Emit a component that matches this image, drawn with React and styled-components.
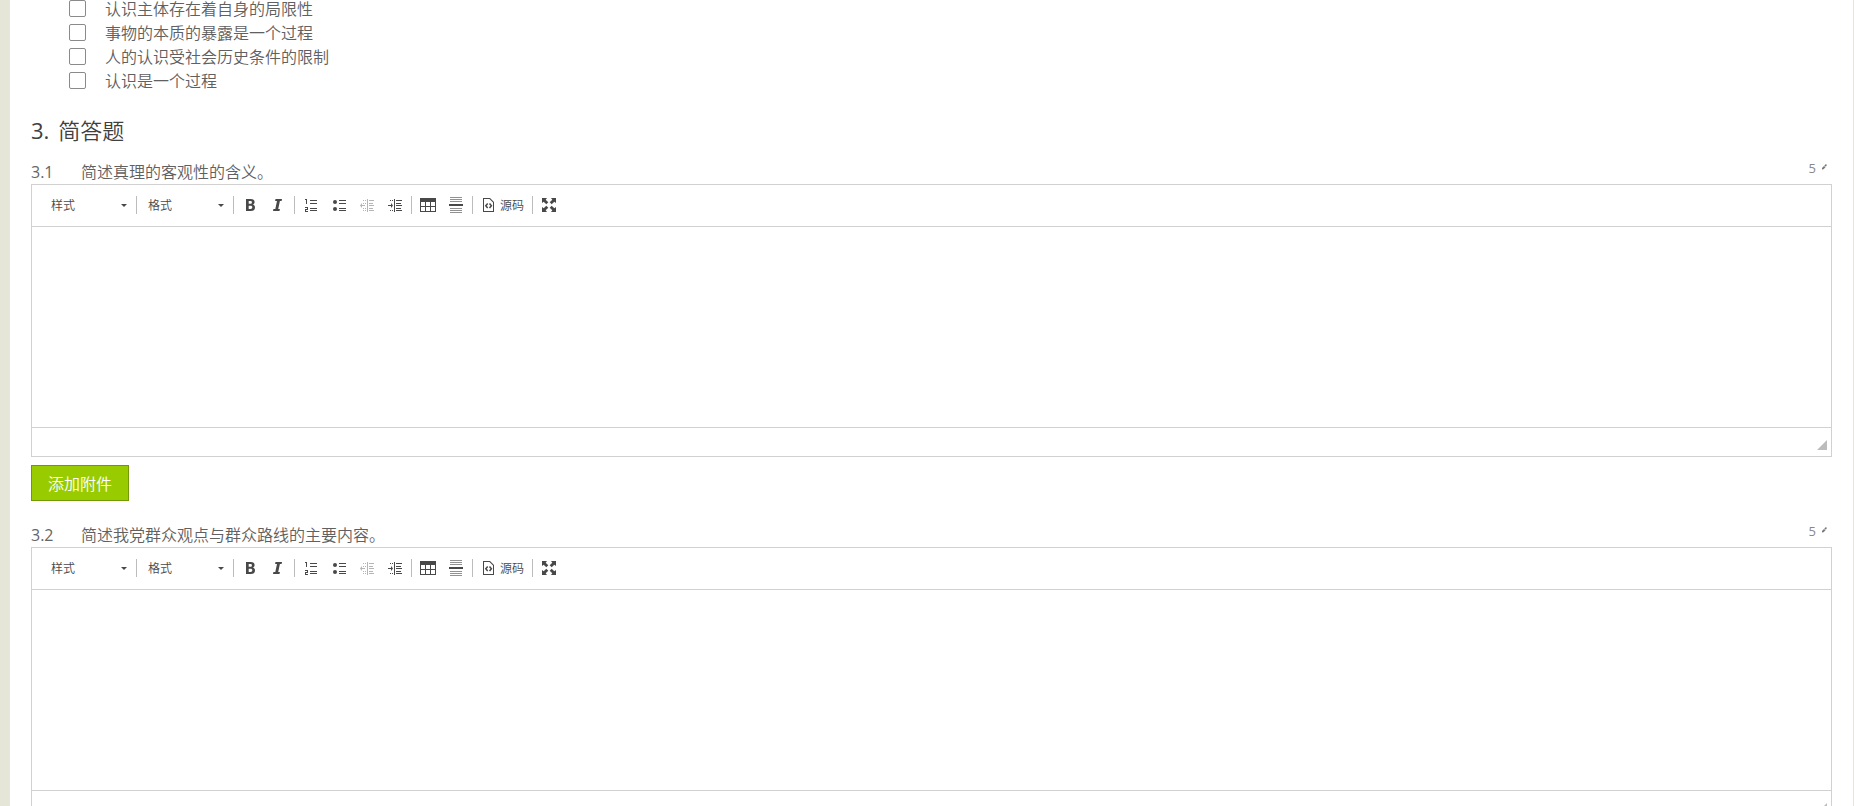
import React from "react";
import styled, { createGlobalStyle } from "styled-components";

const options = [
  "认识主体存在着自身的局限性",
  "事物的本质的暴露是一个过程",
  "人的认识受社会历史条件的限制",
  "认识是一个过程",
];

const questions = [
  { id: "3.1", text: "简述真理的客观性的含义。", score: 5, attachment: true },
  { id: "3.2", text: "简述我党群众观点与群众路线的主要内容。", score: 5 },
];

function Icon({ children }) {
  return (
    <IconSvg viewBox="0 0 16 16" fill="currentColor" aria-hidden="true">
      {children}
    </IconSvg>
  );
}

const BoldIcon = () => (
  <Icon>
    <path
      fillRule="evenodd"
      d="M4 2h4.600c2.600 0 4 1 4 3 0 1.400-.8 2.300-2 2.600 1.500.3 2.400 1.300 2.400 2.800C13 12.700 11.400 14 8.800 14H4zM6.700 4.100v2.700h1.700c1 0 1.500-.5 1.500-1.400S9.400 4.100 8.300 4.100zM6.700 8.800v3.100h1.900c1.100 0 1.700-.6 1.700-1.600s-.6-1.500-1.800-1.500z"
    />
  </Icon>
);

const ItalicIcon = () => (
  <Icon>
    <path d="M5.500 2H12l-.4 2H9.900l-1.700 8h1.700l-.4 2H3l.4-2h1.900L7 4H5.100z" />
  </Icon>
);

const NumberedIcon = () => (
  <Icon>
    <path d="M2 3V2h2v5H3V3zM2 10h3v3H3v1h2v1H2v-3h2v-1H2z" />
    <path d="M7 3h7v1H7zM7 6h7v1H7zM7 11h7v1H7zM7 13h7v1H7z" />
  </Icon>
);

const BulletedIcon = () => (
  <Icon>
    <circle cx="4" cy="5" r="2" />
    <circle cx="4" cy="12" r="2" />
    <path d="M8 3h7v1H8zM8 6h7v1H8zM8 11h7v1H8zM8 13h7v1H8z" />
  </Icon>
);

const OutdentIcon = () => (
  <Icon>
    <path d="M1 8.500L3 6v2h3v1H3v2zM8 2h1v13H8z" />
    <path d="M4 3h1v1H4zM6 3h1v1H6zM4 6h1v1H4zM6 6h1v1H6zM4 11h1v1H4zM6 11h1v1H6zM4 13h1v1H4zM6 13h1v1H6z" />
    <path d="M10 3h5v1h-5zM10 6h4v1h-4zM10 8h5v1h-5zM10 11h4v1h-4zM10 13h5v1h-5z" />
  </Icon>
);

const IndentIcon = () => (
  <Icon>
    <path d="M6 8.500L4 6v2H1v1h3v2zM7 2h1v13H7z" />
    <path d="M3 3h1v1H3zM5 3h1v1H5zM3 13h1v1H3zM5 13h1v1H5z" />
    <path d="M9 3h6v1H9zM9 6h5v1H9zM9 8h6v1H9zM9 11h5v1H9zM9 13h6v1H9z" />
  </Icon>
);

const TableIcon = () => (
  <Icon>
    <path
      fillRule="evenodd"
      d="M0 1h16v14H0zM1 5v4h4V5zM6 5v4h4V5zM11 5v4h4V5zM1 10v4h4v-4zM6 10v4h4v-4zM11 10v4h4v-4z"
    />
  </Icon>
);

const RuleIcon = () => (
  <Icon>
    <path d="M1 7h14v2H1z" />
    <path
      opacity="0.6"
      d="M2 0h12v1H2zM2 2h12v1H2zM2 4h12v1H2zM2 11h12v1H2zM2 13h12v1H2zM2 15h12v1H2z"
    />
  </Icon>
);

const SourceIcon = () => (
  <Icon>
    <path
      fillRule="evenodd"
      d="M2 1h7l4 4v10H2zM3 2v12h9V5.500L8.500 2z"
    />
    <path
      fill="none"
      stroke="currentColor"
      strokeWidth="1.500"
      d="M6.700 6.500L4.800 8.700l1.900 2.200M8.500 6.500l1.900 2.200-1.900 2.200"
    />
  </Icon>
);

const MaximizeIcon = () => (
  <Icon>
    <path d="M1 1h5L4.700 2.700 7.300 5.300 5.300 7.300 2.700 4.700 1 6zM15 1h-5l1.300 1.700L8.700 5.300l2 2 2.600-2.600L15 6zM1 15h5l-1.300-1.700 2.600-2.600-2-2-2.600 2.600L1 10zM15 15h-5l1.300-1.700-2.600-2.600 2-2 2.600 2.600L15 10z" />
  </Icon>
);

function Combo({ label }) {
  return (
    <ComboBox>
      <ComboSelect aria-label={label}>
        <option>{label}</option>
      </ComboSelect>
      <Caret viewBox="0 0 6 3" aria-hidden="true">
        <path d="M0 0h6L3 3z" />
      </Caret>
    </ComboBox>
  );
}

function Editor({ id }) {
  return (
    <EditorFrame>
      <Toolbar>
        <Combo label="样式" />
        <Separator />
        <Combo label="格式" />
        <Separator />
        <ToolButton type="button" aria-label="加粗"><BoldIcon /></ToolButton>
        <ToolButton type="button" aria-label="倾斜"><ItalicIcon /></ToolButton>
        <Separator />
        <ToolButton type="button" aria-label="编号列表"><NumberedIcon /></ToolButton>
        <ToolButton type="button" aria-label="项目列表"><BulletedIcon /></ToolButton>
        <ToolButton type="button" aria-label="减少缩进量" disabled><OutdentIcon /></ToolButton>
        <ToolButton type="button" aria-label="增加缩进量"><IndentIcon /></ToolButton>
        <Separator />
        <ToolButton type="button" aria-label="表格"><TableIcon /></ToolButton>
        <ToolButton type="button" aria-label="插入水平线"><RuleIcon /></ToolButton>
        <Separator />
        <ToolButton type="button"><SourceIcon />源码</ToolButton>
        <Separator />
        <ToolButton type="button" aria-label="全屏"><MaximizeIcon /></ToolButton>
      </Toolbar>
      <Content id={id} />
      <StatusBar>
        <Resizer viewBox="0 0 10 10" aria-hidden="true">
          <path d="M10 0v10H0z" />
        </Resizer>
      </StatusBar>
    </EditorFrame>
  );
}

function Question({ question }) {
  const fieldId = "answer-" + question.id;
  return (
    <QuestionBlock>
      <QuestionRow>
        <Number>{question.id}</Number>
        <QuestionText htmlFor={fieldId}>{question.text}</QuestionText>
        <Score>
          {question.score}
          <Pencil viewBox="0 0 6 6" aria-hidden="true">
            <path d="M1 5.500V4l2-2 1.500 1.200-2 2zM3.300 1.500L4.500.3 6 .8 4.900 2.700z" />
          </Pencil>
        </Score>
      </QuestionRow>
      <Editor id={fieldId} />
      {question.attachment && (
        <AttachButton type="button">添加附件</AttachButton>
      )}
    </QuestionBlock>
  );
}

function App() {
  return (
    <>
      <GlobalStyle />
      <Paper>
        <OptionList>
          {options.map((option) => (
            <Option key={option}>
              <Checkbox type="checkbox" />
              {option}
            </Option>
          ))}
        </OptionList>
        <Heading>
          <HeadingNumber>3.</HeadingNumber>
          <span>简答题</span>
        </Heading>
        {questions.map((question) => (
          <Question key={question.id} question={question} />
        ))}
      </Paper>
    </>
  );
}

const GlobalStyle = createGlobalStyle`
  * {
    box-sizing: border-box;
  }
  html {
    scrollbar-width: none;
  }
  body {
    margin: 0;
    background: #e6e6d8;
    color: #606060;
    font-family: "Open Sans", "Noto Sans CJK SC", sans-serif;
    font-size: 16px;
    font-weight: 350;
  }
  button, select, textarea {
    font-family: inherit;
    font-weight: inherit;
  }
`;

const Paper = styled.main`
  margin: 0 1px 0 10px;
  padding: 0 21px;
  background: #fff;
`;

const OptionList = styled.div`
  display: flex;
  flex-direction: column;
  align-items: flex-start;
  gap: 7px;
  padding-left: 38px;
`;

const Option = styled.label`
  display: flex;
  align-items: center;
  height: 17px;
  gap: 19px;
  line-height: 22px;
`;

const Checkbox = styled.input`
  appearance: none;
  width: 17px;
  height: 17px;
  margin: 0;
  border: 1px solid #8a8a8a;
  border-radius: 2px;
  background: #fff;

  &:checked {
    background: #99cc00;
  }
`;

const Heading = styled.h2`
  display: flex;
  gap: 9px;
  margin: 25px 0 14px;
  color: #404040;
  font-size: 22px;
  font-weight: 350;
  line-height: 32px;
`;

const HeadingNumber = styled.span`
  font-weight: 400;
`;

const QuestionBlock = styled.section`
  margin-bottom: 22px;
`;

const QuestionRow = styled.div`
  display: flex;
  line-height: 24px;
`;

const Number = styled.span`
  width: 50px;
  color: #666;
  font-weight: 400;
`;

const QuestionText = styled.label`
  flex: 1;
`;

const Score = styled.span`
  display: flex;
  align-items: flex-start;
  gap: 5px;
  padding-right: 5px;
  color: #888;
  font-size: 13px;
  font-weight: 400;
  line-height: 16px;
`;

const Pencil = styled.svg`
  width: 6px;
  height: 6px;
  margin-top: 4px;
  fill: #777;
`;

const EditorFrame = styled.div`
  border: 1px solid #d1d1d1;
  background: #fff;
`;

const Toolbar = styled.div`
  display: flex;
  align-items: center;
  padding: 8px 10px 9px;
  border-bottom: 1px solid #d1d1d1;
  color: #484848;
`;

const ComboBox = styled.div`
  position: relative;
  width: 92px;
  height: 24px;
`;

const ComboSelect = styled.select`
  appearance: none;
  width: 100%;
  height: 24px;
  padding: 0 20px 0 9px;
  border: 0;
  background: transparent;
  color: #484848;
  font-size: 12px;
`;

const Caret = styled.svg`
  position: absolute;
  top: 11px;
  right: 7px;
  width: 6px;
  height: 3px;
  fill: #484848;
  pointer-events: none;
`;

const Separator = styled.span`
  width: 1px;
  height: 18px;
  margin: 0 2px;
  background: #bcbcbc;
`;

const ToolButton = styled.button`
  display: flex;
  align-items: center;
  gap: 3px;
  height: 24px;
  padding: 0 6px;
  border: 0;
  background: transparent;
  color: #484848;
  font-size: 12px;

  &:disabled {
    opacity: 0.4;
  }
`;

const IconSvg = styled.svg`
  width: 16px;
  height: 16px;
`;

const Content = styled.textarea`
  display: block;
  width: 100%;
  height: 200px;
  padding: 20px;
  border: 0;
  outline: none;
  resize: none;
  font-size: 13px;
`;

const StatusBar = styled.div`
  display: flex;
  justify-content: flex-end;
  align-items: flex-end;
  height: 29px;
  padding: 0 4px 6px;
  border-top: 1px solid #d1d1d1;
`;

const Resizer = styled.svg`
  width: 10px;
  height: 10px;
  fill: #bcbcbc;
`;

const AttachButton = styled.button`
  display: block;
  height: 36px;
  margin-top: 8px;
  padding: 0 16px;
  border: 1px solid #739900;
  background: #99cc00;
  color: #fff;
  font-size: 16px;
`;

export default App;
